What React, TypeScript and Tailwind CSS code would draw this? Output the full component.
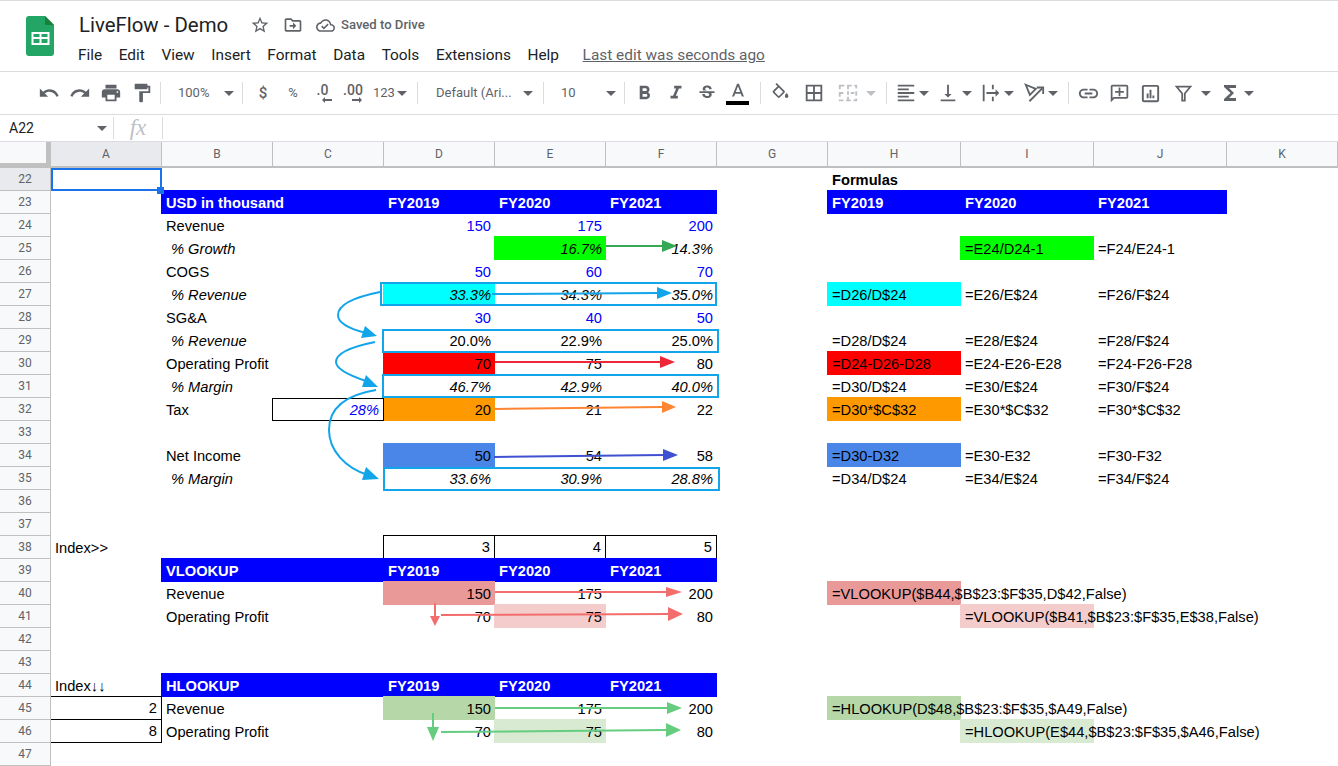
import type { ReactNode } from 'react';

const GRAY = '#5f6368';

const ICONS = {
  undo: 'M12.5 8c-2.65 0-5.05.99-6.9 2.6L2 7v9h9l-3.62-3.62c1.39-1.16 3.16-1.88 5.12-1.88 3.54 0 6.55 2.31 7.6 5.5l2.37-.78C21.08 11.03 17.15 8 12.5 8z',
  redo: 'M18.4 10.6C16.55 8.99 14.15 8 11.5 8c-4.65 0-8.58 3.03-9.96 7.22L3.9 16c1.05-3.19 4.05-5.5 7.6-5.5 1.95 0 3.73.72 5.12 1.88L13 16h9V7l-3.6 3.6z',
  print: 'M19 8H5c-1.66 0-3 1.34-3 3v6h4v4h12v-4h4v-6c0-1.66-1.34-3-3-3zm-3 11H8v-5h8v5zm3-7c-.55 0-1-.45-1-1s.45-1 1-1 1 .45 1 1-.45 1-1 1zm-1-9H6v4h12V3z',
  paint: 'M18 4V3c0-.55-.45-1-1-1H5c-.55 0-1 .45-1 1v4c0 .55.45 1 1 1h12c.55 0 1-.45 1-1V6h1v4H9v11c0 .55.45 1 1 1h2c.55 0 1-.45 1-1v-9h8V4h-3z',
  bold: 'M15.6 10.79c.97-.67 1.65-1.77 1.65-2.79 0-2.26-1.75-4-4-4H7v14h7.04c2.09 0 3.71-1.7 3.71-3.79 0-1.52-.86-2.82-2.15-3.42zM10 6.5h3c.83 0 1.5.67 1.5 1.5s-.67 1.5-1.5 1.5h-3v-3zm3.5 9H10v-3h3.5c.83 0 1.5.67 1.5 1.5s-.67 1.5-1.5 1.5z',
  italic: 'M10 4v3h2.21l-3.42 8H6v3h8v-3h-2.21l3.42-8H18V4z',
  strike: 'M7.24 8.75c-.26-.48-.39-1.03-.39-1.67 0-.61.13-1.16.4-1.67.26-.5.63-.93 1.11-1.29.48-.35 1.05-.63 1.7-.83.66-.19 1.39-.29 2.18-.29.81 0 1.54.11 2.21.34.66.22 1.23.54 1.69.94.47.4.83.88 1.08 1.43.25.55.38 1.15.38 1.81h-3.01c0-.31-.05-.59-.15-.85-.09-.27-.24-.49-.44-.68-.2-.19-.45-.33-.75-.44-.3-.1-.66-.16-1.06-.16-.39 0-.74.04-1.03.13-.29.09-.53.21-.72.36-.19.16-.34.34-.44.55-.1.21-.15.43-.15.66 0 .48.25.88.74 1.21.38.25.77.48 1.41.7H7.39c-.05-.08-.11-.17-.15-.25zM21 12v-2H3v2h9.62c.18.07.4.14.55.2.37.17.66.34.87.51.21.17.35.36.43.57.07.2.11.43.11.69 0 .23-.05.45-.14.66-.09.2-.23.38-.42.53-.19.15-.42.26-.71.35-.29.08-.63.13-1.01.13-.43 0-.83-.04-1.18-.13s-.66-.23-.91-.42c-.25-.19-.45-.44-.59-.75-.14-.31-.25-.76-.25-1.21H6.4c0 .55.08 1.13.24 1.58.16.45.37.85.65 1.21.28.35.6.66.98.92.37.26.78.48 1.22.65.44.17.9.3 1.38.39.48.08.96.13 1.44.13.8 0 1.53-.09 2.18-.28s1.21-.45 1.67-.79c.46-.34.82-.77 1.07-1.27s.38-1.07.38-1.71c0-.6-.1-1.14-.31-1.61-.05-.11-.11-.23-.17-.33H21z',
  letterA: 'M11 3L5.5 17h2.25l1.12-3h6.25l1.12 3h2.25L13 3h-2zm-1.38 9L12 5.67 14.38 12H9.62z',
  fill: 'M16.56 8.94L7.62 0 6.21 1.41l2.38 2.38-5.15 5.15c-.59.59-.59 1.54 0 2.12l5.5 5.5c.29.29.68.44 1.06.44s.77-.15 1.06-.44l5.5-5.5c.59-.58.59-1.53 0-2.12zM5.21 10L10 5.21 14.79 10H5.21zM19 11.5s-2 2.17-2 3.5c0 1.1.9 2 2 2s2-.9 2-2c0-1.33-2-3.5-2-3.5z M5 10h10l-5 5z',
  borders: 'M3 3v18h18V3H3zm8 16H5v-6h6v6zm0-8H5V5h6v6zm8 8h-6v-6h6v6zm0-8h-6V5h6v6z',
  alignLeft: 'M15 15H3v2h12v-2zm0-8H3v2h12V7zM3 13h18v-2H3v2zm0 8h18v-2H3v2zM3 3v2h18V3H3z',
  alignBottom: 'M16 13h-3V3h-2v10H8l4 4 4-4zM4 19v2h16v-2H4z',
  wrap: 'M3 3h2v18H3z M13 3h2v5h-2z M13 16h2v5h-2z M7 11h10V8l4 4-4 4v-3H7z',
  link: 'M3.9 12c0-1.71 1.39-3.1 3.1-3.1h4V7H7c-2.76 0-5 2.24-5 5s2.24 5 5 5h4v-1.9H7c-1.71 0-3.1-1.39-3.1-3.1zM8 13h8v-2H8v2zm9-6h-4v1.9h4c1.71 0 3.1 1.39 3.1 3.1s-1.39 3.1-3.1 3.1h-4V17h4c2.76 0 5-2.24 5-5s-2.24-5-5-5z',
  comment: 'M2 4c0-1.1.9-2 2-2h16c1.1 0 2 .9 2 2v12c0 1.1-.9 2-2 2H6l-4 4V4zm2 13.17L5.17 16H20V4H4v13.17zM11 5h2v4h4v2h-4v4h-2v-4H7V9h4z',
  chart: 'M19 3H5c-1.1 0-2 .9-2 2v14c0 1.1.9 2 2 2h14c1.1 0 2-.9 2-2V5c0-1.1-.9-2-2-2zm0 16H5V5h14v14z M8 12h2v5H8z M11 8h2v9h-2z M14 14h2v3h-2z',
  sigma: 'M18 4H6v2l6.5 6L6 18v2h12v-3h-7l5-5-5-5h7z',
  star: 'M22 9.24l-7.19-.62L12 2 9.19 8.63 2 9.24l5.46 4.73L5.82 21 12 17.27 18.18 21l-1.63-7.03L22 9.24zM12 15.4l-3.76 2.27 1-4.28-3.32-2.88 4.38-.38L12 6.1l1.71 4.04 4.38.38-3.32 2.88 1 4.28L12 15.4z',
  move: 'M20 6h-8l-2-2H4c-1.1 0-1.99.9-1.99 2L2 18c0 1.1.9 2 2 2h16c1.1 0 2-.9 2-2V8c0-1.1-.9-2-2-2zm0 12H4V6h5.17l2 2H20v10z M12 17l4-4-4-4v3H8v2h4z',
  cloud: 'M19.35 10.04C18.67 6.59 15.64 4 12 4 9.11 4 6.6 5.64 5.35 8.04 2.34 8.36 0 10.91 0 14c0 3.31 2.69 6 6 6h13c2.76 0 5-2.24 5-5 0-2.64-2.05-4.78-4.65-4.96zM19 18H6c-2.21 0-4-1.79-4-4 0-2.05 1.53-3.76 3.56-3.97l1.07-.11.5-.95C8.08 7.14 9.94 6 12 6c2.62 0 4.88 1.86 5.39 4.43l.3 1.5 1.53.11c1.56.1 2.78 1.41 2.78 2.96 0 1.65-1.35 3-3 3zm-9-3.82l-2.09-2.09L6.5 13.5 10 17l6.01-6.01-1.41-1.41z',
};

function Icon({ d, size = 18, color = GRAY }: { d: string; size?: number; color?: string }) {
  return (
    <svg width={size} height={size} viewBox="0 0 24 24" fill={color} className="block shrink-0">
      <path d={d} />
    </svg>
  );
}

function Caret({ color = GRAY }: { color?: string }) {
  return (
    <svg width="10" height="5" viewBox="0 0 10 5" fill={color} className="block shrink-0">
      <path d="M0 0h10L5 5z" />
    </svg>
  );
}

function Slot({ w, ml, children }: { w: string; ml?: string; children: ReactNode }) {
  return <div className={`flex items-center justify-center shrink-0 ${w} ${ml ?? ''}`}>{children}</div>;
}

function Sep({ ml }: { ml?: string }) {
  return <div className={`w-px h-[22px] bg-[#dadce0] shrink-0 ${ml ?? ''}`} />;
}

function Toolbar() {
  return (
    <div className="flex items-center h-[43px] pl-[33px] border-b border-[#dadce0] text-[#5f6368] text-[13px] font-['Roboto',sans-serif]">
      <Slot w="w-[31px]"><Icon d={ICONS.undo} size={22} /></Slot>
      <Slot w="w-[31px]"><Icon d={ICONS.redo} size={22} /></Slot>
      <Slot w="w-[31px]"><Icon d={ICONS.print} size={22} /></Slot>
      <Slot w="w-[31px]"><Icon d={ICONS.paint} size={22} /></Slot>
      <Sep ml="ml-[3px]" />

      <div className="flex items-center w-[81px] pl-[17px] shrink-0">
        <span className="w-[46px]">100%</span>
        <Caret />
      </div>
      <Sep />

      <Slot w="w-[30px]" ml="ml-[5px]"><span className="text-[15px] font-medium">$</span></Slot>
      <Slot w="w-[30px]"><span className="text-[13px]">%</span></Slot>
      <Slot w="w-[29px]">
        <div className="flex flex-col items-center">
          <span className="text-[14px] leading-[13px] font-medium">.0</span>
          <svg width="10" height="6" viewBox="0 0 10 6" fill={GRAY} className="block ml-2"><path d="M0 3l3-3v2h7v2H3v2z" /></svg>
        </div>
      </Slot>
      <Slot w="w-[32px]">
        <div className="flex flex-col items-center">
          <span className="text-[14px] leading-[13px] font-medium">.00</span>
          <svg width="10" height="6" viewBox="0 0 10 6" fill={GRAY} className="block ml-2"><path d="M10 3L7 0v2H0v2h7v2z" /></svg>
        </div>
      </Slot>
      <div className="flex items-center w-[48px] pl-[4px] shrink-0">
        <span className="w-[24px]">123</span>
        <Caret />
      </div>
      <Sep />

      <div className="flex items-center w-[125px] pl-[18px] shrink-0">
        <span className="w-[87px] whitespace-nowrap">Default (Ari...</span>
        <Caret />
      </div>
      <Sep />

      <div className="flex items-center w-[80px] pl-[17px] shrink-0">
        <span className="w-[45px]">10</span>
        <Caret />
      </div>
      <Sep />

      <Slot w="w-[31px]" ml="ml-[4px]"><Icon d={ICONS.bold} size={23} /></Slot>
      <Slot w="w-[31px]"><Icon d={ICONS.italic} size={22} /></Slot>
      <Slot w="w-[31px]"><Icon d={ICONS.strike} size={20} /></Slot>
      <Slot w="w-[31px]">
        <div className="flex flex-col items-center">
          <Icon d={ICONS.letterA} size={22} />
          <div className="w-[23px] h-[4px] bg-black -mt-[2px]" />
        </div>
      </Slot>
      <Sep ml="ml-[7px]" />

      <Slot w="w-[31px]" ml="ml-[4px]"><Icon d={ICONS.fill} size={21} /></Slot>
      <Slot w="w-[31px]" ml="ml-[2px]"><Icon d={ICONS.borders} size={22} /></Slot>
      <Slot w="w-[31px]" ml="ml-[3px]">
        <svg width="22" height="22" viewBox="0 0 24 24" fill="none" stroke="#bdc1c6" strokeWidth="2" className="block">
          <rect x="3" y="4" width="18" height="16" strokeDasharray="5 3" />
          <path d="M3 12h6M15 12h6M12 4v16" strokeDasharray="4 2" />
        </svg>
      </Slot>
      <Slot w="w-[10px]" ml="ml-[3px]"><Caret color="#bdc1c6" /></Slot>
      <Sep ml="ml-[10px]" />

      <Slot w="w-[22px]" ml="ml-[8px]"><Icon d={ICONS.alignLeft} size={22} /></Slot>
      <Slot w="w-[10px]" ml="ml-[2px]"><Caret /></Slot>
      <Slot w="w-[22px]" ml="ml-[8px]"><Icon d={ICONS.alignBottom} size={22} /></Slot>
      <Slot w="w-[10px]" ml="ml-[3px]"><Caret /></Slot>
      <Slot w="w-[22px]" ml="ml-[8px]"><Icon d={ICONS.wrap} size={22} /></Slot>
      <Slot w="w-[10px]" ml="ml-[2px]"><Caret /></Slot>
      <Slot w="w-[22px]" ml="ml-[9px]">
        <svg width="22" height="22" viewBox="0 0 24 24" fill="none" stroke={GRAY} strokeWidth="2" className="block">
          <path d="M3 3l11 4.5L7.5 14z" />
          <path d="M7 21L21 7" />
          <path d="M15 6h7v7" />
        </svg>
      </Slot>
      <Slot w="w-[10px]" ml="ml-[3px]"><Caret /></Slot>
      <Sep ml="ml-[10px]" />

      <Slot w="w-[31px]" ml="ml-[4px]"><Icon d={ICONS.link} size={23} /></Slot>
      <Slot w="w-[31px]"><Icon d={ICONS.comment} size={21} /></Slot>
      <Slot w="w-[31px]"><Icon d={ICONS.chart} size={23} /></Slot>
      <Slot w="w-[30px]" ml="ml-[2px]">
        <svg width="21" height="21" viewBox="0 0 24 24" fill="none" stroke={GRAY} strokeWidth="2" className="block">
          <path d="M4 4h16l-6.5 8v8h-3v-8z" />
        </svg>
      </Slot>
      <Slot w="w-[10px]" ml="ml-[3px]"><Caret /></Slot>
      <Slot w="w-[22px]" ml="ml-[8px]"><Icon d={ICONS.sigma} size={24} /></Slot>
      <Slot w="w-[10px]" ml="ml-[3px]"><Caret /></Slot>
    </div>
  );
}

function Header() {
  const menus = ['File', 'Edit', 'View', 'Insert', 'Format', 'Data', 'Tools', 'Extensions', 'Help'];
  return (
    <div className="flex h-[72px] border-t border-b border-[#dadce0] font-['Roboto',sans-serif]">
      <div className="pl-[26px] pt-[15px] w-[78px] shrink-0">
        <svg width="28" height="40" viewBox="0 0 28 40" className="block">
          <path d="M3 0h16l9 9v28a3 3 0 0 1-3 3H3a3 3 0 0 1-3-3V3a3 3 0 0 1 3-3z" fill="#23a566" />
          <path d="M19 0l9 9h-9z" fill="#188038" />
          <path fillRule="evenodd" d="M5.5 16h18v13h-18z M7.5 18v3h6v-3z M15.5 18v3h6v-3z M7.5 23v4h6v-4z M15.5 23v4h6v-4z" fill="#fff" />
        </svg>
      </div>
      <div className="flex flex-col">
        <div className="flex items-center h-[32px] mt-[8px] pl-px">
          <span className="text-[20.4px] text-[#202124] w-[171px]">LiveFlow - Demo</span>
          <Icon d={ICONS.star} size={20} />
          <div className="ml-[13px]"><Icon d={ICONS.move} size={20} /></div>
          <div className="ml-[13px]"><Icon d={ICONS.cloud} size={19} /></div>
          <span className="ml-[6px] text-[13.1px] font-medium text-[#5f6368]">Saved to Drive</span>
        </div>
        <div className="flex items-center gap-[16.6px] h-[24px] mt-[3px] text-[15.4px] text-[#202124]">
          {menus.map((m) => (
            <span key={m}>{m}</span>
          ))}
          <span className="ml-[7px] text-[#5f6368] underline">Last edit was seconds ago</span>
        </div>
      </div>
    </div>
  );
}

function FormulaBar() {
  return (
    <div className="flex items-center h-[27px] border-b border-[#dadce0] font-['Roboto',sans-serif] bg-white">
      <span className="w-[97px] pl-[9px] text-[14px] text-[#202124] shrink-0">A22</span>
      <Caret />
      <Sep ml="ml-[6px]" />
      <span className="w-[48px] text-center text-[23px] italic text-[#bdc1c6] font-['Liberation_Serif',serif] shrink-0">fx</span>
      <Sep />
    </div>
  );
}

type Cell = { t?: string; cls?: string };

// filled cells reach 1px over the neighbour's gridline, like the sheet does
const RIGHT = 'justify-end';
const ITALIC = 'justify-end italic';
const BLUE_TEXT = 'justify-end text-[#0000ff]';
const HDR = 'bg-[#0000ff] -mt-px -ml-px pl-[5px] pt-px text-white font-bold';
const OVER = '-mt-px -ml-px pl-[5px] pt-px';

const num = (t: string, cls = RIGHT): Cell => ({ t, cls });
const ital = (t: string): Cell => ({ t, cls: ITALIC });
const blue = (t: string): Cell => ({ t, cls: BLUE_TEXT });
const label = (t: string): Cell => ({ t });
const sub = (t: string): Cell => ({ t, cls: 'italic pl-[9px]' });
const hdr = (t = ''): Cell => ({ t, cls: HDR });
const first = (t: string): Cell => ({ t, cls: `${HDR} relative z-[1]` });
const BOX = 'justify-end border border-black';

const ROWS: Record<number, Record<string, Cell>> = {
  22: { H: { t: 'Formulas', cls: 'font-bold' } },
  23: { B: first('USD in thousand'), C: hdr(), D: hdr('FY2019'), E: hdr('FY2020'), F: hdr('FY2021'), H: hdr('FY2019'), I: hdr('FY2020'), J: hdr('FY2021') },
  24: { B: label('Revenue'), D: blue('150'), E: blue('175'), F: blue('200') },
  25: {
    B: sub('% Growth'),
    E: { t: '16.7%', cls: `justify-end italic bg-[#00ff00] ${OVER}` },
    F: ital('14.3%'),
    I: { t: '=E24/D24-1', cls: `bg-[#00ff00] ${OVER}` },
    J: label('=F24/E24-1'),
  },
  26: { B: label('COGS'), D: blue('50'), E: blue('60'), F: blue('70') },
  27: {
    B: sub('% Revenue'),
    D: { t: '33.3%', cls: `justify-end italic bg-[#00ffff] ${OVER}` },
    E: ital('34.3%'),
    F: ital('35.0%'),
    H: { t: '=D26/D$24', cls: `bg-[#00ffff] ${OVER}` },
    I: label('=E26/E$24'),
    J: label('=F26/F$24'),
  },
  28: { B: label('SG&A'), D: blue('30'), E: blue('40'), F: blue('50') },
  29: { B: sub('% Revenue'), D: num('20.0%'), E: num('22.9%'), F: num('25.0%'), H: label('=D28/D$24'), I: label('=E28/E$24'), J: label('=F28/F$24') },
  30: {
    B: label('Operating Profit'),
    D: { t: '70', cls: `justify-end bg-[#ff0000] ${OVER}` },
    E: num('75'),
    F: num('80'),
    H: { t: '=D24-D26-D28', cls: `bg-[#ff0000] ${OVER}` },
    I: label('=E24-E26-E28'),
    J: label('=F24-F26-F28'),
  },
  31: { B: sub('% Margin'), D: ital('46.7%'), E: ital('42.9%'), F: ital('40.0%'), H: label('=D30/D$24'), I: label('=E30/E$24'), J: label('=F30/F$24') },
  32: {
    B: label('Tax'),
    C: { t: '28%', cls: 'justify-end italic text-[#0000ff] border border-black -ml-px' },
    D: { t: '20', cls: 'justify-end bg-[#ff9900]' },
    E: num('21'),
    F: num('22'),
    H: { t: '=D30*$C$32', cls: `bg-[#ff9900] ${OVER}` },
    I: label('=E30*$C$32'),
    J: label('=F30*$C$32'),
  },
  34: {
    B: label('Net Income'),
    D: { t: '50', cls: `justify-end bg-[#4a86e8] ${OVER}` },
    E: num('54'),
    F: num('58'),
    H: { t: '=D30-D32', cls: `bg-[#4a86e8] ${OVER}` },
    I: label('=E30-E32'),
    J: label('=F30-F32'),
  },
  35: { B: sub('% Margin'), D: ital('33.6%'), E: ital('30.9%'), F: ital('28.8%'), H: label('=D34/D$24'), I: label('=E34/E$24'), J: label('=F34/F$24') },
  38: {
    A: label('Index>>'),
    D: { t: '3', cls: `${BOX} -ml-px -mt-px` },
    E: { t: '4', cls: 'justify-end border-t border-b border-r border-black -ml-px -mt-px' },
    F: { t: '5', cls: 'justify-end border-t border-b border-r border-black -ml-px -mt-px' },
  },
  39: { B: hdr('VLOOKUP'), C: hdr(), D: hdr('FY2019'), E: hdr('FY2020'), F: hdr('FY2021') },
  40: {
    B: label('Revenue'),
    D: { t: '150', cls: `justify-end bg-[#ea9999] ${OVER}` },
    E: num('175'),
    F: num('200'),
    H: { t: '=VLOOKUP($B44,$B$23:$F$35,D$42,False)', cls: `bg-[#ea9999] ${OVER}` },
  },
  41: {
    B: label('Operating Profit'),
    D: num('70'),
    E: { t: '75', cls: `justify-end bg-[#f4cccc] ${OVER}` },
    F: num('80'),
    I: { t: '=VLOOKUP($B41,$B$23:$F$35,E$38,False)', cls: `bg-[#f4cccc] ${OVER}` },
  },
  44: { A: label('Index↓↓'), B: hdr('HLOOKUP'), C: hdr(), D: hdr('FY2019'), E: hdr('FY2020'), F: hdr('FY2021') },
  45: {
    A: { t: '2', cls: 'justify-end border-t border-b border-r border-black -mt-px' },
    B: label('Revenue'),
    D: { t: '150', cls: `justify-end bg-[#b6d7a8] ${OVER}` },
    E: num('175'),
    F: num('200'),
    H: { t: '=HLOOKUP(D$48,$B$23:$F$35,$A49,False)', cls: `bg-[#b6d7a8] ${OVER}` },
  },
  46: {
    A: { t: '8', cls: 'justify-end border-b border-r border-black' },
    B: label('Operating Profit'),
    D: num('70'),
    E: { t: '75', cls: `justify-end bg-[#d9ead3] ${OVER}` },
    F: num('80'),
    I: { t: '=HLOOKUP(E$44,$B$23:$F$35,$A46,False)', cls: `bg-[#d9ead3] ${OVER}` },
  },
};

const COLS = ['A', 'B', 'C', 'D', 'E', 'F', 'G', 'H', 'I', 'J', 'K'];
const ROW_NUMS = Array.from({ length: 26 }, (_, i) => 22 + i);

function Overlay() {
  const sky = '#12a5e9';
  return (
    <svg className="absolute left-0 top-0 pointer-events-none z-[2]" width="1338" height="624" viewBox="0 142 1338 624" fill="none">
      {/* outlined ranges */}
      <g stroke={sky} strokeWidth="2">
        <rect x="381" y="283" width="335" height="22" />
        <rect x="383" y="330" width="335" height="22" />
        <rect x="383" y="375" width="335" height="22" />
        <rect x="384" y="468" width="335" height="22" />
      </g>
      {/* curved arrows between ranges */}
      <g stroke={sky} strokeWidth="2">
        <path d="M380 292C350 298 338 306 338 315C338 323 350 329 366 333" />
        <path d="M375 342C350 347 336 353 336 362C336 368 348 375 366 381" />
        <path d="M376 390C345 395 329 408 329 430C329 450 345 468 368 475" />
      </g>
      <g fill={sky}>
        <path d="M377 336L365 326L361 338z" />
        <path d="M378 387L366 375L362 387z" />
        <path d="M379 479L366 467L362 480z" />
      </g>
      {/* straight arrows across years */}
      <path d="M606 246H664" stroke="#34a853" strokeWidth="2" />
      <path d="M677 246L662 240V252z" fill="#34a853" />
      <path d="M492 294L658 293" stroke={sky} strokeWidth="2" />
      <path d="M672 293L657 287V299z" fill={sky} />
      <path d="M495 362H661" stroke="#ee2737" strokeWidth="2" />
      <path d="M675 362L660 356V368z" fill="#ee2737" />
      <path d="M495 409L662 407" stroke="#ff8533" strokeWidth="2" />
      <path d="M676 407L662 401V413z" fill="#ff8533" />
      <path d="M494 457L664 455" stroke="#3f51d0" strokeWidth="2" />
      <path d="M678 455L663 449V461z" fill="#3f51d0" />
      {/* lookup arrows */}
      <path d="M495 592H667" stroke="#f46d6d" strokeWidth="2" />
      <path d="M682 592L666 587V597z" fill="#f46d6d" />
      <path d="M441 615L669 614" stroke="#f46d6d" strokeWidth="2" />
      <path d="M683 614L668 607V621z" fill="#f46d6d" />
      <path d="M435 603V617" stroke="#f46d6d" strokeWidth="2" />
      <path d="M435 626L430 616H440z" fill="#f46d6d" />
      <path d="M495 708H668" stroke="#66cc80" strokeWidth="2" />
      <path d="M682 708L667 702V714z" fill="#66cc80" />
      <path d="M441 732L667 730" stroke="#66cc80" strokeWidth="2" />
      <path d="M681 730L666 723V737z" fill="#66cc80" />
      <path d="M433 713V728" stroke="#66cc80" strokeWidth="2" />
      <path d="M433 741L427 727H439z" fill="#66cc80" />
    </svg>
  );
}

function Sheet() {
  return (
    <div className="relative text-black">
      <div className="grid grid-cols-[51px_repeat(7,111px)_repeat(3,133px)_111px] grid-rows-[26px_repeat(26,23px)]">
        {/* column headers */}
        <div className="bg-[#f8f9fa] border-r-[5px] border-b-[5px] border-[#c0c0c0]" />
        {COLS.map((c) => (
          <div
            key={c}
            className={`flex items-center justify-center border-r border-b-2 border-r-[#c0c0c0] border-b-[#c0c0c0] text-[12px] text-[#5f6368] font-['Roboto',sans-serif] ${c === 'A' ? 'bg-[#e8eaed]' : 'bg-[#f8f9fa]'}`}
          >
            {c}
          </div>
        ))}
        {/* rows */}
        {ROW_NUMS.map((n) => (
          <div key={n} className="contents">
            <div
              className={`flex items-center justify-center border-r border-b border-[#c0c0c0] text-[12px] text-[#5f6368] font-['Roboto',sans-serif] ${n === 22 ? 'bg-[#e8eaed]' : 'bg-[#f8f9fa]'}`}
            >
              {n}
            </div>
            {COLS.map((c) => {
              const cell = ROWS[n]?.[c];
              return (
                <div
                  key={c}
                  className={`flex items-center px-[4px] whitespace-nowrap text-[14.67px] font-['Liberation_Sans',Arial,sans-serif] ${cell?.cls ?? ''}`}
                >
                  {cell?.t}
                </div>
              );
            })}
          </div>
        ))}
      </div>
      <Overlay />
      {/* active cell A22 */}
      <div className="absolute left-[51px] top-[26px] w-[111px] h-[23px] border-2 border-[#1a73e8] pointer-events-none z-[3]" />
      <div className="absolute left-[157px] top-[45px] w-[7px] h-[7px] bg-[#1a73e8] pointer-events-none z-[3]" />
    </div>
  );
}

export default function App() {
  return (
    <div className="w-[1338px] h-[766px] overflow-hidden bg-white">
      <Header />
      <Toolbar />
      <FormulaBar />
      <Sheet />
    </div>
  );
}
